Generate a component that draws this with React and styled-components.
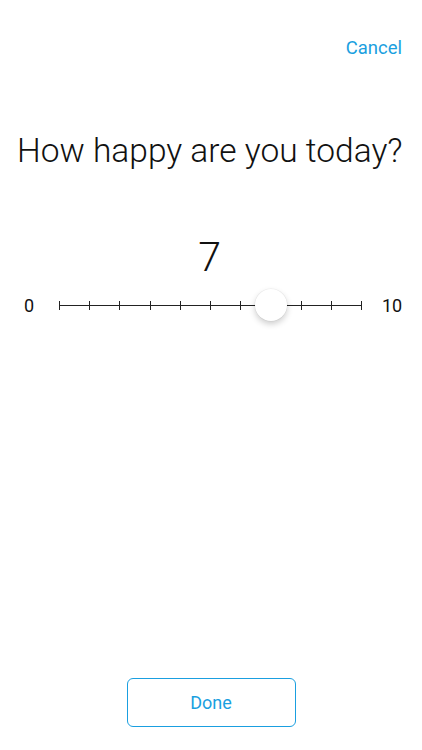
import React, { useState } from "react";
import styled, { createGlobalStyle } from "styled-components";

const GlobalStyle = createGlobalStyle`
  html, body, #root {
    margin: 0;
    height: 100%;
  }
  body {
    background: #ffffff;
    font-family: Roboto, "Liberation Sans", sans-serif;
    color: #111111;
  }
`;

const BLUE = "#1a9fe0";

const Screen = styled.div`
  height: 100vh;
  display: flex;
  flex-direction: column;
  box-sizing: border-box;
  padding: 37px 20px 23px 17px;
`;

const TopBar = styled.div`
  display: flex;
  justify-content: flex-end;
`;

const LinkButton = styled.button`
  background: none;
  border: none;
  padding: 0;
  font-family: Roboto, "Liberation Sans", sans-serif;
  font-size: 18.5px;
  color: ${BLUE};
  cursor: pointer;
`;

const Question = styled.h1`
  margin: 72px 0 0;
  font-size: 33.5px;
  font-weight: 300;
  text-align: center;
  color: #111;
  white-space: nowrap;
`;

const Value = styled.div`
  margin-top: 67px;
  font-size: 41px;
  font-weight: 300;
  text-align: center;
  line-height: 1;
`;

const SliderRow = styled.div`
  margin-top: 11px;
  display: flex;
  align-items: center;
`;

const EndLabel = styled.span`
  font-size: 18px;
  font-weight: 400;
  width: ${(p) => p.$w}px;
  text-align: ${(p) => p.$align};
  padding-left: ${(p) => p.$pl || 0}px;
`;

const Track = styled.div`
  position: relative;
  flex: 1;
  height: 32px;
  margin: 0 20px 0 18px;
  display: flex;
  justify-content: space-between;
  align-items: center;
  &::before {
    content: "";
    position: absolute;
    left: 0;
    right: 0;
    top: 50%;
    height: 1px;
    background: #222;
  }
`;

const Tick = styled.span`
  width: 1px;
  height: 9px;
  background: #222;
`;

const Thumb = styled.div`
  position: absolute;
  top: 0;
  width: 32px;
  height: 32px;
  border-radius: 50%;
  background: #fff;
  transform: translateX(-50%);
  box-shadow: 0 3px 6px rgba(0, 0, 0, 0.2), 0 0 0 0.5px rgba(0, 0, 0, 0.06);
`;

const Spacer = styled.div`
  flex: 1;
`;

const Footer = styled.div`
  display: flex;
  justify-content: center;
  padding-left: 3px;
`;

const OutlineButton = styled.button`
  width: 169px;
  height: 49px;
  border: 1px solid ${BLUE};
  border-radius: 6px;
  background: #fff;
  color: ${BLUE};
  font-family: Roboto, "Liberation Sans", sans-serif;
  font-size: 18px;
  cursor: pointer;
`;

const App = () => {
  const [value] = useState(7);
  const max = 10;
  const ticks = Array.from({ length: max + 1 }, (_, i) => i);

  return (
    <>
      <GlobalStyle />
      <Screen>
        <TopBar>
          <LinkButton>Cancel</LinkButton>
        </TopBar>
        <Question>How happy are you today?</Question>
        <Value>{value}</Value>
        <SliderRow>
          <EndLabel $w={17} $align="left" $pl={7}>0</EndLabel>
          <Track>
            {ticks.map((t) => (
              <Tick key={t} />
            ))}
            <Thumb style={{ left: `${(value / max) * 100}%` }} />
          </Track>
          <EndLabel $w={20} $align="right">10</EndLabel>
        </SliderRow>
        <Spacer />
        <Footer>
          <OutlineButton>Done</OutlineButton>
        </Footer>
      </Screen>
    </>
  );
};

export default App;
